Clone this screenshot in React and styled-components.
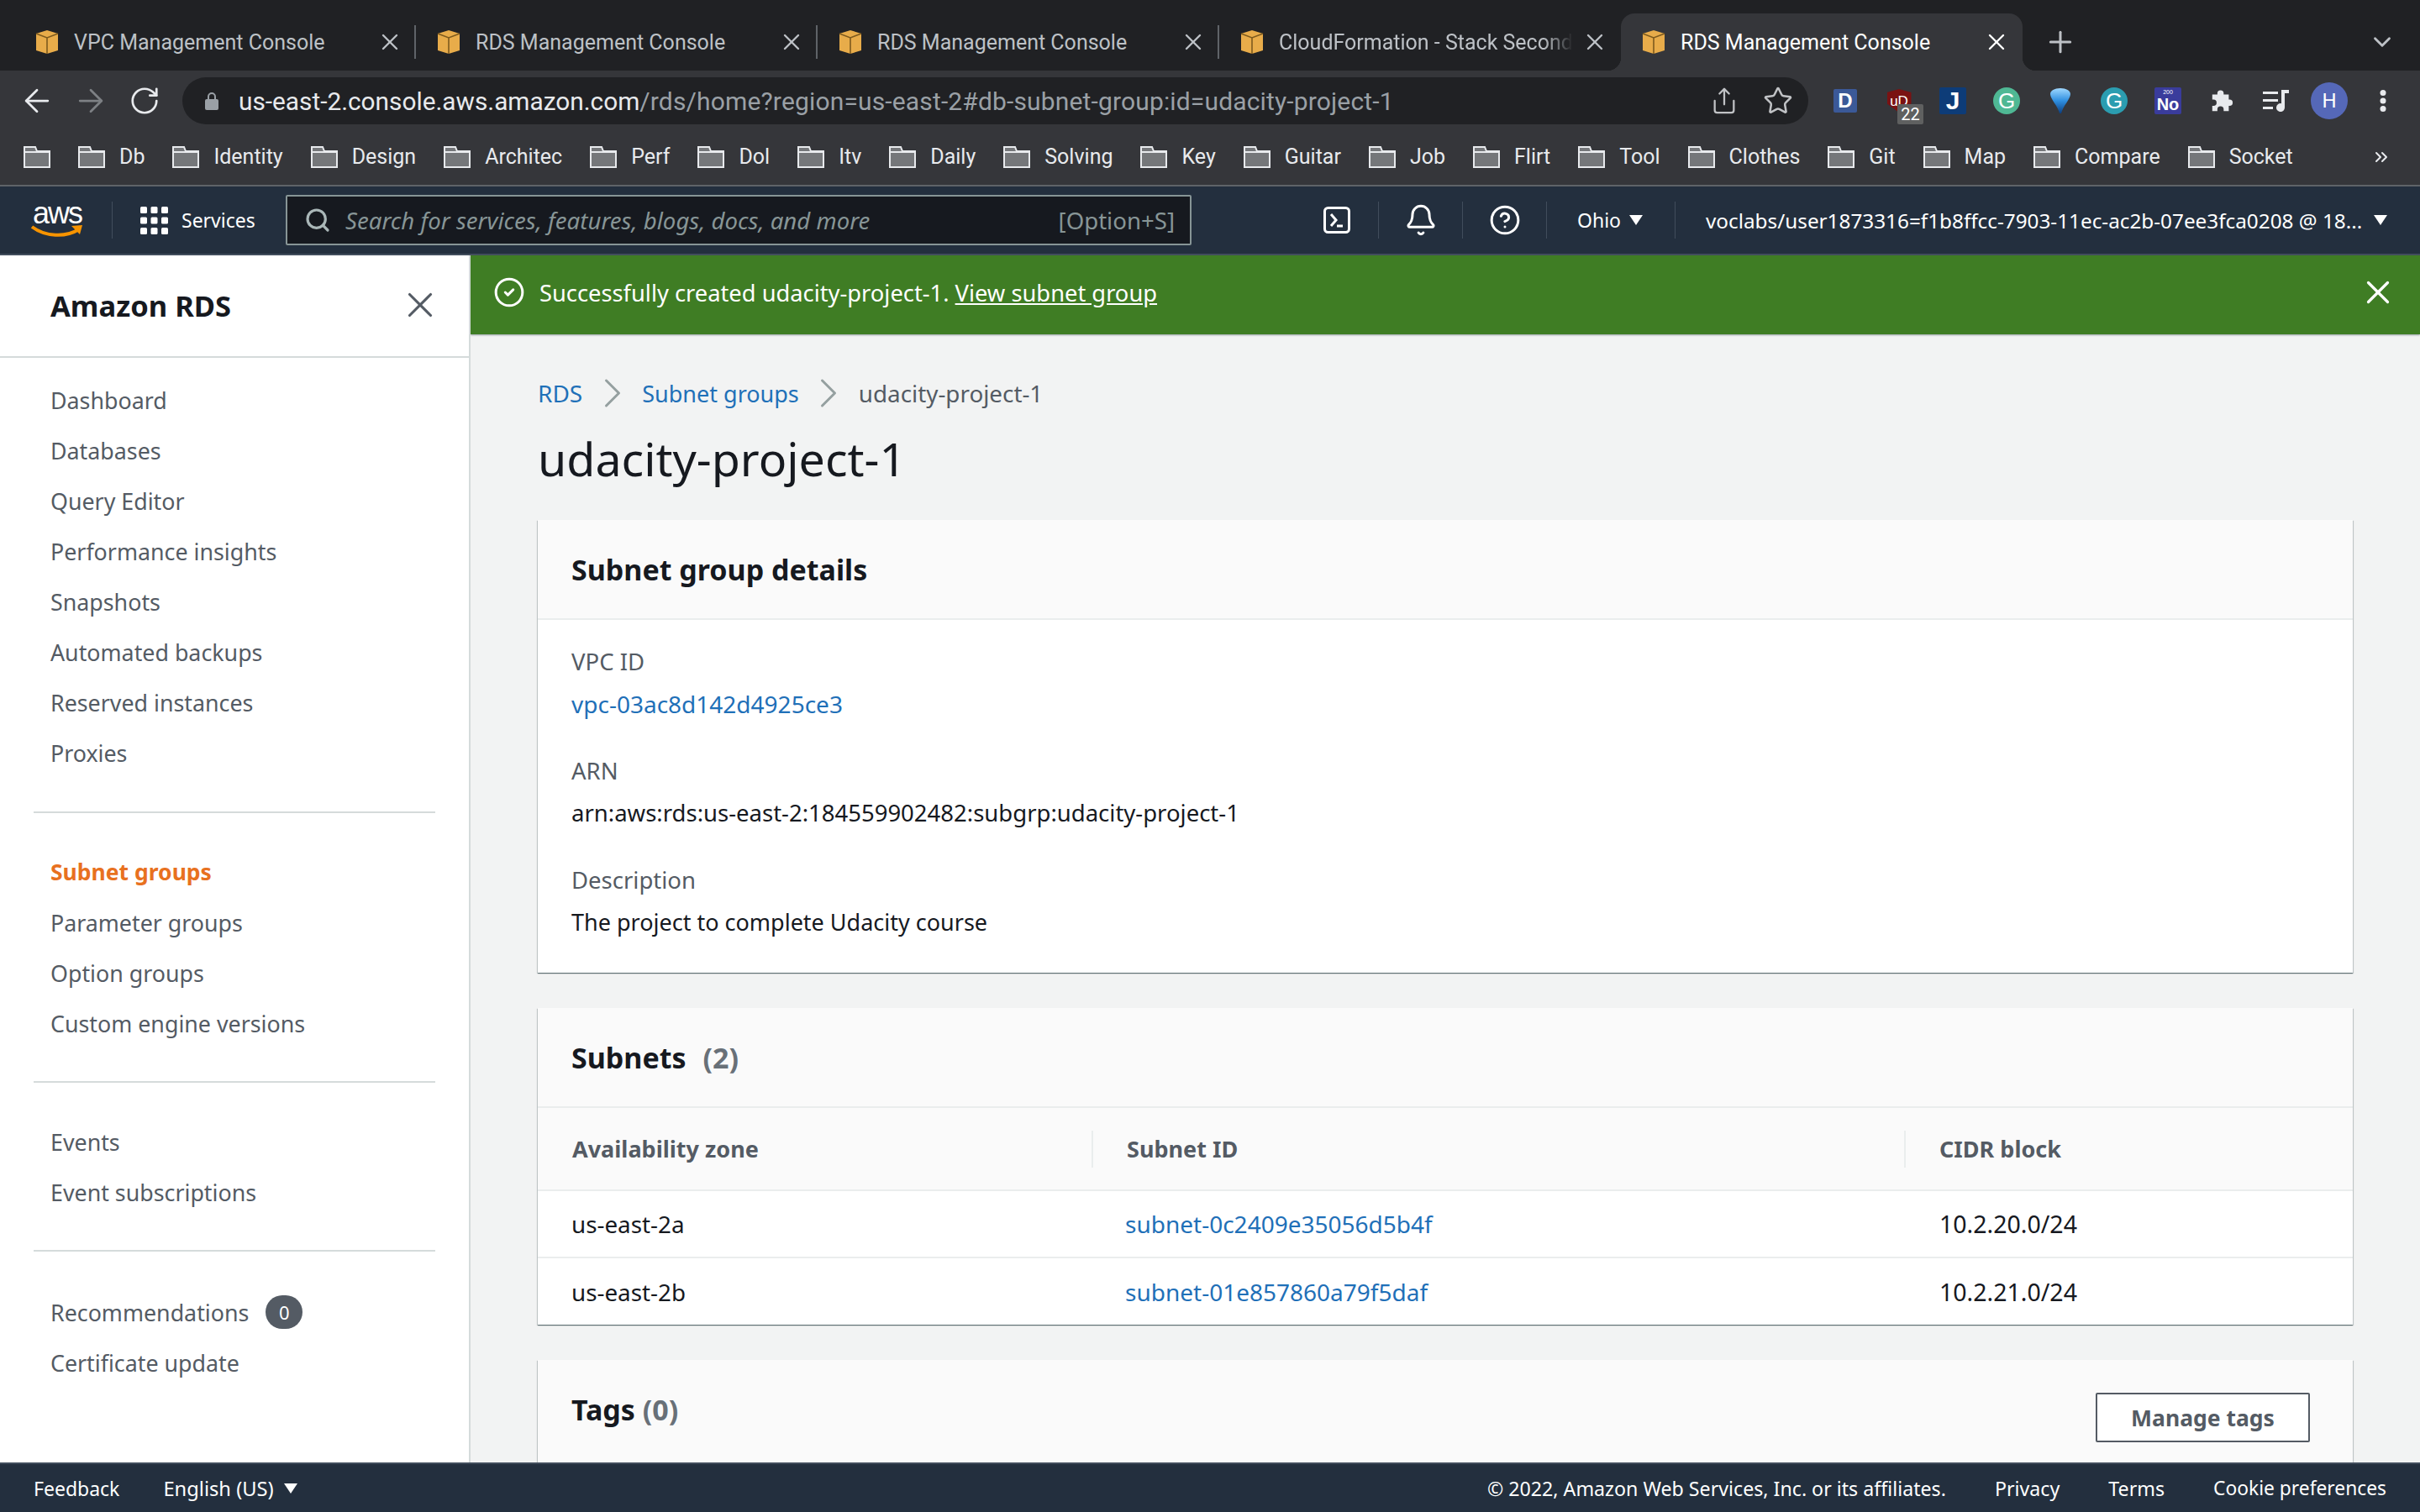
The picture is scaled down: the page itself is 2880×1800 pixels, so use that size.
import React from 'react'
import styled, { createGlobalStyle } from 'styled-components'
import { ArrowLeft, ArrowRight, RotateCw, Share, Star, Plus, X, ChevronDown, ChevronRight, Bell, CircleHelp, Search, CircleCheck, ChevronsRight } from 'lucide-react'

const GlobalStyle = createGlobalStyle`
  html, body { margin: 0; padding: 0; background: #f2f3f3; }
  body { width: 2880px; height: 1800px; overflow: hidden; font-family: "Noto Sans", "Liberation Sans", sans-serif; }
  * { box-sizing: border-box; }
`

const Page = styled.div`
  width: 2880px;
  height: 1800px;
  display: flex;
  flex-direction: column;
  overflow: hidden;
`

// browser chrome
const TabStrip = styled.div`
  height: 84px;
  flex: none;
  background: #202124;
  display: flex;
  align-items: flex-end;
  padding-left: 17px;
  font-family: "Roboto", sans-serif;
`
const Tab = styled.div`
  position: relative;
  height: 68px;
  width: 478px;
  flex: none;
  display: flex;
  align-items: center;
  padding: 0 15px 0 25px;
  gap: 18px;
  color: ${p => p.$active ? '#fff' : '#bdc1c6'};
  background: ${p => p.$active ? '#35363a' : 'transparent'};
  border-radius: 16px 16px 0 0;
  font-size: 25px;
  &::after {
    content: "";
    display: ${p => p.$active || p.$noSep ? 'none' : 'block'};
    position: absolute;
    right: 0;
    top: 14px;
    height: 40px;
    width: 2px;
    background: #5f6368;
  }
  ${p => p.$active && `
    &::before {
      content: "";
      position: absolute;
      left: -16px;
      bottom: 0;
      width: 16px;
      height: 16px;
      background: radial-gradient(circle at 0 0, transparent 16px, #35363a 16.5px);
    }
    &::after {
      content: "";
      display: block;
      position: absolute;
      right: -16px;
      bottom: 0;
      top: auto;
      width: 16px;
      height: 16px;
      background: radial-gradient(circle at 100% 0, transparent 16px, #35363a 16.5px);
    }
  `}
`
const TabTitle = styled.span`
  flex: 1;
  min-width: 0;
  overflow: hidden;
  white-space: nowrap;
  ${p => p.$fade && `-webkit-mask-image: linear-gradient(to right, #000 90%, transparent 100%);`}
`
const TabClose = styled(X).attrs({ strokeWidth: 1.8 })`
  flex: none;
  width: 32px;
  height: 32px;
  margin-left: -8px;
`
const NewTab = styled(Plus).attrs({ strokeWidth: 1.8 })`
  color: #bdc1c6;
  width: 40px;
  height: 40px;
  margin: 0 0 14px 25px;
  flex: none;
`
const TabMenu = styled(ChevronDown)`
  color: #bdc1c6;
  width: 34px;
  height: 34px;
  margin: 0 28px 17px auto;
  flex: none;
`
const Toolbar = styled.div`
  height: 64px;
  flex: none;
  background: #35363a;
  display: flex;
  align-items: flex-end;
  padding-left: 12px;
  font-family: "Roboto", sans-serif;
`
const NavBtn = styled.div`
  width: 64px;
  height: 56px;
  flex: none;
  display: flex;
  align-items: center;
  justify-content: center;
  color: ${p => p.$off ? '#7d8084' : '#e8eaed'};
`
const UrlPill = styled.div`
  width: 1935px;
  height: 56px;
  margin-left: 13px;
  flex: none;
  background: #202124;
  border-radius: 28px;
  display: flex;
  align-items: center;
  padding-left: 27px;
  font-size: 30px;
  letter-spacing: .15px;
  color: #9aa0a6;
  white-space: nowrap;
`
const LockIcon = styled.svg`
  width: 16px;
  height: 22px;
  flex: none;
  margin-right: 24px;
`
const Host = styled.span`
  color: #e8eaed;
  letter-spacing: 0;
  font-size: 29.8px;
`
const PillActions = styled.div`
  margin-left: auto;
  display: flex;
  align-items: center;
  padding-right: 4px;
  color: #c0c2c5;
`
const PillBtn = styled.div`
  width: 64px;
  display: flex;
  align-items: center;
  justify-content: center;
`
const Extensions = styled.div`
  display: flex;
  margin-left: 12px;
  height: 56px;
  flex: none;
`
const Ext = styled.div`
  position: relative;
  width: 64px;
  height: 56px;
  flex: none;
  display: flex;
  align-items: center;
  justify-content: center;
  color: #e8eaed;
`
const ExtSquare = styled.div`
  width: ${p => p.$w || 32}px;
  height: ${p => p.$h || 32}px;
  background: ${p => p.$bg};
  border-radius: ${p => p.$round || '2px'};
  color: #fff;
  display: flex;
  flex-direction: column;
  align-items: center;
  justify-content: center;
  font-weight: ${p => p.$thin ? 400 : 700};
  font-size: ${p => p.$size || 24}px;
  line-height: 1;
  font-family: "Liberation Sans", sans-serif;
  ${p => p.$shield && `clip-path: polygon(50% 0, 100% 14%, 100% 62%, 50% 100%, 0 62%, 0 14%);`}
`
const TinyCount = styled.span`
  font-size: 7px;
  font-weight: 400;
  margin-bottom: 1px;
`
const ExtBadge = styled.span`
  position: absolute;
  left: 30px;
  top: 32px;
  width: 31px;
  height: 24px;
  background: #5f6060;
  border-radius: 2px;
  color: #fff;
  font-size: 20px;
  line-height: 24px;
  text-align: center;
`
const Avatar = styled.div`
  width: 44px;
  height: 44px;
  border-radius: 50%;
  background: #5568b8;
  color: #fff;
  font-size: 24px;
  display: flex;
  align-items: center;
  justify-content: center;
`
const Bookmarks = styled.div`
  height: 74px;
  flex: none;
  background: #35363a;
  border-bottom: 2px solid #5f6368;
  display: flex;
  align-items: center;
  padding: 5px 0 0 28px;
  gap: 33px;
  font-family: "Roboto", sans-serif;
  font-size: 25px;
  color: #e8eaed;
`
const Bookmark = styled.div`
  display: flex;
  align-items: center;
  gap: 17px;
  flex: none;
`
const More = styled(ChevronsRight)`
  margin: 0 34px 0 auto;
  width: 24px;
  height: 24px;
  color: #e8eaed;
  flex: none;
`

// aws console nav
const ConsoleNav = styled.div`
  height: 82px;
  flex: none;
  background: #232f3e;
  border-bottom: 2px solid #414d5c;
  display: flex;
  align-items: center;
  padding-left: 35px;
  color: #fff;
`
const Logo = styled.div`
  width: 66px;
  height: 44px;
  flex: none;
  display: flex;
  flex-direction: column;
  align-items: center;
`
const LogoWord = styled.span`
  font-family: "Liberation Sans", sans-serif;
  font-size: 36px;
  line-height: 28px;
  color: #fff;
  letter-spacing: -2px;
`
const LogoSmile = styled.svg`
  width: 66px;
  height: 16px;
  flex: none;
`
const NavSep = styled.div`
  width: 1px;
  height: 44px;
  background: #414d5c;
  margin: 0 33px 0 32px;
  flex: none;
`
const Services = styled.div`
  display: flex;
  align-items: center;
  gap: 16px;
  font-size: 23px;
  width: 140px;
  margin-right: 33px;
  flex: none;
`
const SearchBox = styled.div`
  width: 1078px;
  height: 60px;
  flex: none;
  background: #16191f;
  border: 2px solid #879596;
  border-radius: 2px;
  display: flex;
  align-items: center;
  padding: 0 18px 0 20px;
  color: #aab7b8;
  font-size: 27.6px;
`
const SearchIcon = styled(Search).attrs({ strokeWidth: 2.4 })`
  width: 32px;
  height: 32px;
  flex: none;
`
const SearchHint = styled.span`
  font-style: italic;
  margin-left: 17px;
  color: #879596;
`
const Shortcut = styled.span`
  margin-left: auto;
  color: #879596;
`
const NavCells = styled.div`
  display: flex;
  align-items: center;
  margin-left: 123px;
  flex: 1;
`
const NavCell = styled.div`
  height: 44px;
  width: ${p => p.$w || 100}px;
  flex: none;
  display: flex;
  align-items: center;
  justify-content: ${p => p.$left ? 'flex-start' : 'center'};
  border-right: ${p => p.$last ? 'none' : '1px solid #414d5c'};
  padding-left: ${p => p.$pad || 0}px;
  font-size: ${p => p.$size || 23}px;
  white-space: nowrap;
`
const Caret = styled.span`
  display: inline-block;
  width: 0;
  height: 0;
  border-left: 8px solid transparent;
  border-right: 8px solid transparent;
  border-top: 12px solid #fff;
  margin-left: ${p => p.$gap || 12}px;
  flex: none;
`

// main area
const Main = styled.div`
  flex: 1;
  min-height: 0;
  display: flex;
  overflow: hidden;
`
const Sidebar = styled.aside`
  width: 560px;
  flex: none;
  background: #fff;
  border-right: 2px solid #d5dbdb;
`
const SideHead = styled.div`
  height: 122px;
  border-bottom: 2px solid #d5dbdb;
  display: flex;
  align-items: center;
  justify-content: space-between;
  padding: 0 33px 2px 60px;
  color: #16191f;
  font-size: 34.5px;
  font-weight: 700;
`
const SideClose = styled(X).attrs({ strokeWidth: 1.5 })`
  width: 50px;
  height: 50px;
  color: #545b64;
`
const SideGroup = styled.div`
  padding: ${p => p.$first ? 20 : p.$last ? 42 : 40}px 0 ${p => p.$first ? 40 : 39}px;
  margin: 0 40px;
  border-bottom: ${p => p.$last ? 'none' : '2px solid #d5dbdb'};
`
const SideItem = styled.div`
  height: 60px;
  padding-left: 20px;
  display: flex;
  align-items: center;
  gap: 20px;
  font-size: ${p => p.$active ? 26.5 : 26.8}px;
  color: ${p => p.$active ? '#e8711f' : '#545b64'};
  font-weight: ${p => p.$active ? 700 : 400};
`
const Count = styled.span`
  width: 44px;
  height: 40px;
  border-radius: 20px;
  background: #545b64;
  color: #fff;
  font-size: 22px;
  display: flex;
  align-items: center;
  justify-content: center;
`
const Content = styled.main`
  flex: 1;
  min-width: 0;
  background: #f2f3f3;
  overflow: hidden;
`
const Flash = styled.div`
  height: 94px;
  background: #3f7d24;
  box-shadow: 0 1px 2px rgba(0, 28, 36, .4);
  display: flex;
  align-items: center;
  padding: 0 27px 6px 27px;
  color: #fff;
  font-size: 27.3px;
`
const FlashIcon = styled(CircleCheck).attrs({ strokeWidth: 1.9 })`
  width: 38px;
  height: 38px;
  flex: none;
`
const FlashText = styled.span`
  margin-left: 17px;
`
const FlashLink = styled.a`
  color: #fff;
  text-decoration: underline;
`
const FlashClose = styled(X).attrs({ strokeWidth: 1.7 })`
  margin-left: auto;
  width: 46px;
  height: 46px;
  flex: none;
`
const Body = styled.div`
  padding: 50px 80px 0;
`
const Crumbs = styled.div`
  height: 40px;
  display: flex;
  align-items: center;
  font-size: 27.8px;
  color: #545b64;
`
const Link = styled.a`
  color: #1f70b8;
  font-size: ${p => p.$size || 28}px;
`
const CrumbSep = styled(ChevronRight).attrs({ strokeWidth: 1.2 })`
  width: 60px;
  height: 60px;
  color: #95a0a0;
  margin: 0 5.5px;
  flex: none;
`
const Title = styled.h1`
  margin: 22px 0 37px;
  height: 72px;
  line-height: 72px;
  font-size: 55.5px;
  font-weight: 400;
  color: #16191f;
`
const Panel = styled.section`
  background: #fff;
  box-shadow: 0 1px 1px 0 rgba(0, 28, 36, .45), 1px 1px 1px 0 rgba(0, 28, 36, .15), -1px 1px 1px 0 rgba(0, 28, 36, .15);
  margin-bottom: 42px;
`
const PanelHead = styled.div`
  height: 119px;
  background: #fafafa;
  border-bottom: 2px solid #eaeded;
  display: flex;
  align-items: center;
  justify-content: space-between;
  padding: 0 51px 0 40px;
  ${p => p.$open && `
    height: 140px;
    border-bottom: none;
    align-items: flex-start;
    padding-top: 36px;
  `}
`
const PanelTitle = styled.h2`
  margin: 0;
  font-size: 34px;
  font-weight: 700;
  color: #16191f;
`
const Num = styled.span`
  color: #687078;
  margin-left: ${p => p.$gap || 0}px;
`
const Fields = styled.div`
  padding: 30px 40px 40px;
`
const Field = styled.div`
  margin-bottom: ${p => p.$last ? 0 : 40}px;
`
const FieldLabel = styled.div`
  height: 40px;
  line-height: 40px;
  font-size: 27.5px;
  color: #545b64;
  margin-bottom: 10px;
`
const FieldValue = styled.div`
  height: 40px;
  line-height: 40px;
  font-size: ${p => p.$size || 28}px;
  color: #16191f;
`
const Row = styled.div`
  display: grid;
  grid-template-columns: 661px 967px 1fr;
  height: ${p => p.$head ? 99 : p.$last ? 79 : 80}px;
  align-items: center;
  background: ${p => p.$head ? '#fafafa' : '#fff'};
  border-bottom: ${p => p.$last ? 'none' : '2px solid #eaeded'};
`
const Th = styled.div`
  height: 44px;
  display: flex;
  align-items: center;
  padding-left: ${p => p.$first ? 41 : 40}px;
  font-size: 27px;
  font-weight: 700;
  color: #545b64;
  border-right: ${p => p.$last ? 'none' : '2px solid #eaeded'};
`
const Td = styled.div`
  padding-left: 40px;
  font-size: ${p => p.$size || 27.8}px;
  color: #16191f;
`
const SubnetLink = styled(Link)`
  margin-left: -2px;
`
const Button = styled.button`
  width: 255px;
  height: 59px;
  background: #fff;
  border: 2px solid #545b64;
  border-radius: 2px;
  color: #545b64;
  font-family: inherit;
  font-size: 26.5px;
  font-weight: 700;
  margin-top: 3px;
`
const Footer = styled.footer`
  height: 59px;
  flex: none;
  background: #232f3e;
  border-top: 2px solid #414d5c;
  display: flex;
  align-items: center;
  padding: 0 40px;
  color: #fff;
  font-size: 23px;
`
const FootLang = styled.span`
  display: flex;
  align-items: center;
  margin-left: 52px;
  font-size: 23.7px;
`
const FootRight = styled.div`
  margin-left: auto;
  display: flex;
  align-items: center;
  gap: 58px;
  font-size: 23.2px;
`
const FootCookie = styled.span`
  font-size: 22.8px;
`

function Cube() {
  return (
    <svg width="28" height="28" viewBox="0 0 28 28" style={{ flex: 'none' }}>
      <path d="M14 0l13 4v20l-13 4-13-4V4z" fill="#e8ac4a" />
      <path d="M1 4l13 5 13-5M14 9v19" fill="none" stroke="#7d5a1e" strokeWidth="1.6" />
    </svg>
  )
}

function Folder() {
  return (
    <svg width="32" height="26" viewBox="0 0 32 26" style={{ flex: 'none' }}>
      <path d="M1 25V1h13l2 5h15v19z" fill="#75777a" stroke="#e8eaed" strokeWidth="2" />
      <path d="M1 7h30" stroke="#e8eaed" strokeWidth="2" />
    </svg>
  )
}

function Grid9() {
  const cells = [0, 1, 2]
  return (
    <svg width="33" height="33" viewBox="0 0 33 33" style={{ flex: 'none' }}>
      {cells.map(r => cells.map(c => (
        <rect key={r + '-' + c} x={c * 12.5} y={r * 12.5} width="8" height="8" rx="1.5" fill="#fff" />
      )))}
    </svg>
  )
}

const bookmarks = ['', 'Db', 'Identity', 'Design', 'Architec', 'Perf', 'Dol', 'Itv', 'Daily', 'Solving', 'Key', 'Guitar', 'Job', 'Flirt', 'Tool', 'Clothes', 'Git', 'Map', 'Compare', 'Socket']
const sideGroups = [
  ['Dashboard', 'Databases', 'Query Editor', 'Performance insights', 'Snapshots', 'Automated backups', 'Reserved instances', 'Proxies'],
  ['Subnet groups', 'Parameter groups', 'Option groups', 'Custom engine versions'],
  ['Events', 'Event subscriptions'],
]

export default function App() {
  return (
    <Page>
      <GlobalStyle />
      <TabStrip>
        <Tab><Cube /><TabTitle>VPC Management Console</TabTitle><TabClose /></Tab>
        <Tab><Cube /><TabTitle>RDS Management Console</TabTitle><TabClose /></Tab>
        <Tab><Cube /><TabTitle>RDS Management Console</TabTitle><TabClose /></Tab>
        <Tab $noSep><Cube /><TabTitle $fade>CloudFormation - Stack Second</TabTitle><TabClose /></Tab>
        <Tab $active><Cube /><TabTitle>RDS Management Console</TabTitle><TabClose /></Tab>
        <NewTab />
        <TabMenu />
      </TabStrip>
      <Toolbar>
        <NavBtn><ArrowLeft size={44} strokeWidth={1.5} /></NavBtn>
        <NavBtn $off><ArrowRight size={44} strokeWidth={1.5} /></NavBtn>
        <NavBtn><RotateCw size={38} strokeWidth={1.7} /></NavBtn>
        <UrlPill>
          <LockIcon viewBox="0 0 16 22">
            <path d="M4 10V6a4 4 0 0 1 8 0v4" fill="none" stroke="#9aa0a6" strokeWidth="2" />
            <rect x="0" y="9" width="16" height="13" rx="2" fill="#9aa0a6" />
          </LockIcon>
          <Host>us-east-2.console.aws.amazon.com</Host>/rds/home?region=us-east-2#db-subnet-group:id=udacity-project-1
          <PillActions>
            <PillBtn><Share size={34} strokeWidth={1.6} /></PillBtn>
            <PillBtn><Star size={36} strokeWidth={1.7} /></PillBtn>
          </PillActions>
        </UrlPill>
        <Extensions>
          <Ext><ExtSquare $bg="#3b5998" $w={28} $h={28}>D</ExtSquare></Ext>
          <Ext><ExtSquare $bg="#7a1212" $w={29} $h={28} $size={17} $thin $shield>uD</ExtSquare><ExtBadge>22</ExtBadge></Ext>
          <Ext><ExtSquare $bg="#0d3c78" $size={30}>J</ExtSquare></Ext>
          <Ext><ExtSquare $bg="#4fb894" $round="50%" $thin $size={26}>G</ExtSquare></Ext>
          <Ext>
            <svg width="26" height="30" viewBox="0 0 26 30">
              <defs>
                <linearGradient id="gem" x1="0" y1="0" x2="0" y2="1">
                  <stop offset="0" stopColor="#9fd8ff" />
                  <stop offset=".5" stopColor="#2f8fe0" />
                  <stop offset="1" stopColor="#0d3f80" />
                </linearGradient>
              </defs>
              <path d="M1 7C1 3 6 0 13 0s12 3 12 7c0 6-9 14-11 23h-2C10 21 1 13 1 7z" fill="url(#gem)" />
            </svg>
          </Ext>
          <Ext><ExtSquare $bg="#2b9db0" $round="50%" $thin $size={26}>G</ExtSquare></Ext>
          <Ext><ExtSquare $bg="#3a3c9c" $size={20}><TinyCount>200</TinyCount>No</ExtSquare></Ext>
          <Ext>
            <svg width="28" height="28" viewBox="0 0 28 30" fill="#e8eaed">
              <path d="M2 7h6.500v-1.500a4 4 0 0 1 8 0V7H23v6.500h1a4 4 0 0 1 0 8h-1V28h-6.500v-2a4 4 0 0 0-8 0v2H2v-6.500h1.500a4 4 0 0 0 0-8H2z" />
            </svg>
          </Ext>
          <Ext>
            <svg width="31" height="26" viewBox="0 0 31 26" fill="#e8eaed">
              <path d="M0 2h18v3H0zM0 11h18v3H0zM0 20h12v3H0zM22 0h9v4h-5v17a5 5 0 1 1-4-4.800z" />
            </svg>
          </Ext>
          <Ext><Avatar>H</Avatar></Ext>
          <Ext>
            <svg width="8" height="26" viewBox="0 0 8 26" fill="#e8eaed">
              <circle cx="4" cy="3.500" r="3.500" /><circle cx="4" cy="13" r="3.500" /><circle cx="4" cy="22.500" r="3.500" />
            </svg>
          </Ext>
        </Extensions>
      </Toolbar>
      <Bookmarks>
        {bookmarks.map((b, i) => <Bookmark key={i}><Folder />{b && <span>{b}</span>}</Bookmark>)}
        <More />
      </Bookmarks>
      <ConsoleNav>
        <Logo>
          <LogoWord>aws</LogoWord>
          <LogoSmile viewBox="0 0 66 16">
            <path d="M3 2c16 12 40 13 56 3" fill="none" stroke="#f79400" strokeWidth="4" />
            <path d="M50 1l13-1-3 11z" fill="#f79400" />
          </LogoSmile>
        </Logo>
        <NavSep />
        <Services><Grid9 />Services</Services>
        <SearchBox>
          <SearchIcon />
          <SearchHint>Search for services, features, blogs, docs, and more</SearchHint>
          <Shortcut>[Option+S]</Shortcut>
        </SearchBox>
        <NavCells>
          <NavCell>
            <svg width="32" height="32" viewBox="0 0 32 32" fill="none" stroke="#fff" strokeWidth="3">
              <rect x="1.500" y="1.500" width="29" height="29" rx="4" />
              <path d="M9 9l6 7-6 7M16 23h7" />
            </svg>
          </NavCell>
          <NavCell><Bell size={40} strokeWidth={1.8} /></NavCell>
          <NavCell><CircleHelp size={38} strokeWidth={1.9} /></NavCell>
          <NavCell $w={153} $left $pad={36}>Ohio<Caret $gap={10} /></NavCell>
          <NavCell $last $w={886} $left $pad={36} $size={24.3}>voclabs/user1873316=f1b8ffcc-7903-11ec-ac2b-07ee3fca0208 @ 18...<Caret $gap={14} /></NavCell>
        </NavCells>
      </ConsoleNav>
      <Main>
        <Sidebar>
          <SideHead>Amazon RDS<SideClose /></SideHead>
          {sideGroups.map((g, i) => (
            <SideGroup key={i} $first={i === 0}>
              {g.map(t => <SideItem key={t} $active={t === 'Subnet groups'}>{t}</SideItem>)}
            </SideGroup>
          ))}
          <SideGroup $last>
            <SideItem>Recommendations<Count>0</Count></SideItem>
            <SideItem>Certificate update</SideItem>
          </SideGroup>
        </Sidebar>
        <Content>
          <Flash>
            <FlashIcon />
            <FlashText>Successfully created udacity-project-1. <FlashLink>View subnet group</FlashLink></FlashText>
            <FlashClose />
          </Flash>
          <Body>
            <Crumbs>
              <Link>RDS</Link><CrumbSep /><Link $size={27}>Subnet groups</Link><CrumbSep />udacity-project-1
            </Crumbs>
            <Title>udacity-project-1</Title>
            <Panel>
              <PanelHead><PanelTitle>Subnet group details</PanelTitle></PanelHead>
              <Fields>
                <Field><FieldLabel>VPC ID</FieldLabel><FieldValue><Link>vpc-03ac8d142d4925ce3</Link></FieldValue></Field>
                <Field><FieldLabel>ARN</FieldLabel><FieldValue $size={27.5}>arn:aws:rds:us-east-2:184559902482:subgrp:udacity-project-1</FieldValue></Field>
                <Field $last><FieldLabel>Description</FieldLabel><FieldValue $size={27}>The project to complete Udacity course</FieldValue></Field>
              </Fields>
            </Panel>
            <Panel>
              <PanelHead><PanelTitle>Subnets<Num $gap={20}>(2)</Num></PanelTitle></PanelHead>
              <Row $head>
                <Th $first>Availability zone</Th>
                <Th>Subnet ID</Th>
                <Th $last>CIDR block</Th>
              </Row>
              <Row><Td>us-east-2a</Td><Td><SubnetLink>subnet-0c2409e35056d5b4f</SubnetLink></Td><Td $size={28.5}>10.2.20.0/24</Td></Row>
              <Row $last><Td>us-east-2b</Td><Td><SubnetLink>subnet-01e857860a79f5daf</SubnetLink></Td><Td $size={28.5}>10.2.21.0/24</Td></Row>
            </Panel>
            <Panel>
              <PanelHead $open><PanelTitle>Tags <Num>(0)</Num></PanelTitle><Button>Manage tags</Button></PanelHead>
            </Panel>
          </Body>
        </Content>
      </Main>
      <Footer>
        Feedback
        <FootLang>English (US)<Caret /></FootLang>
        <FootRight>
          <span>© 2022, Amazon Web Services, Inc. or its affiliates.</span>
          <span>Privacy</span>
          <span>Terms</span>
          <FootCookie>Cookie preferences</FootCookie>
        </FootRight>
      </Footer>
    </Page>
  )
}
